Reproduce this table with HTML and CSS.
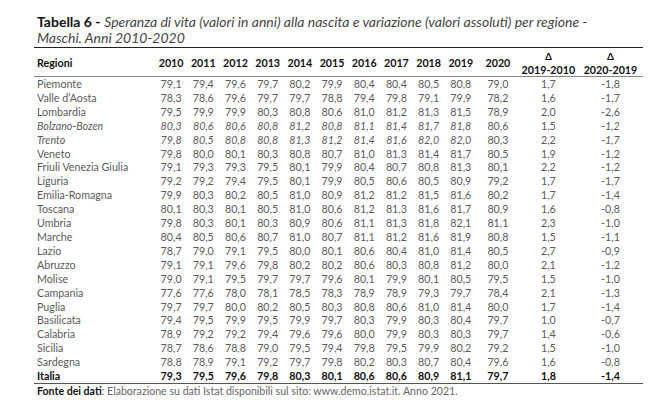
FILE: index.html
```html
<!DOCTYPE html>
<html lang="it">
<head>
<meta charset="utf-8">
<title>Tabella 6</title>
<link rel="stylesheet" href="styles.css">
</head>
<body>
<div class="page">
  <div class="title">
    <span class="t-bold">Tabella 6 -</span> <span class="t-it">Speranza di vita (valori in anni) alla nascita e variazione (valori assoluti) per regione -</span><br>
    <span class="t-it">Maschi. Anni 2010-2020</span>
  </div>
  <table class="data">
    <colgroup>
      <col class="c-reg"><col class="c-y"><col class="c-y"><col class="c-y"><col class="c-y"><col class="c-y"><col class="c-y"><col class="c-y"><col class="c-y"><col class="c-y"><col class="c-y"><col class="c-y20"><col class="c-d1"><col class="c-d2">
    </colgroup>
    <thead>
      <tr>
        <th class="reg">Regioni</th>
        <th>2010</th><th>2011</th><th>2012</th><th>2013</th><th>2014</th><th>2015</th><th>2016</th><th>2017</th><th>2018</th><th>2019</th><th>2020</th>
        <th class="delta"><span class="d">Δ</span><br>2019-2010</th>
        <th class="delta"><span class="d">Δ</span><br>2020-2019</th>
      </tr>
    </thead>
    <tbody>
      <tr><td>Piemonte</td><td>79,1</td><td>79,4</td><td>79,6</td><td>79,7</td><td>80,2</td><td>79,9</td><td>80,4</td><td>80,4</td><td>80,5</td><td>80,8</td><td>79,0</td><td>1,7</td><td>-1,8</td></tr>
      <tr><td>Valle d’Aosta</td><td>78,3</td><td>78,6</td><td>79,6</td><td>79,7</td><td>79,7</td><td>78,8</td><td>79,4</td><td>79,8</td><td>79,1</td><td>79,9</td><td>78,2</td><td>1,6</td><td>-1,7</td></tr>
      <tr><td>Lombardia</td><td>79,5</td><td>79,9</td><td>79,9</td><td>80,3</td><td>80,8</td><td>80,6</td><td>81,0</td><td>81,2</td><td>81,3</td><td>81,5</td><td>78,9</td><td>2,0</td><td>-2,6</td></tr>
      <tr class="it"><td>Bolzano-Bozen</td><td>80,3</td><td>80,6</td><td>80,6</td><td>80,8</td><td>81,2</td><td>80,8</td><td>81,1</td><td>81,4</td><td>81,7</td><td>81,8</td><td class="up">80,6</td><td class="up">1,5</td><td>-1,2</td></tr>
      <tr class="it"><td>Trento</td><td>79,8</td><td>80,5</td><td>80,8</td><td>80,8</td><td>81,3</td><td>81,2</td><td>81,4</td><td>81,6</td><td>82,0</td><td>82,0</td><td class="up">80,3</td><td class="up">2,2</td><td>-1,7</td></tr>
      <tr><td>Veneto</td><td>79,8</td><td>80,0</td><td>80,1</td><td>80,3</td><td>80,8</td><td>80,7</td><td>81,0</td><td>81,3</td><td>81,4</td><td>81,7</td><td>80,5</td><td>1,9</td><td>-1,2</td></tr>
      <tr><td>Friuli Venezia Giulia</td><td>79,1</td><td>79,3</td><td>79,3</td><td>79,5</td><td>80,1</td><td>79,9</td><td>80,4</td><td>80,7</td><td>80,8</td><td>81,3</td><td>80,1</td><td>2,2</td><td>-1,2</td></tr>
      <tr><td>Liguria</td><td>79,2</td><td>79,2</td><td>79,4</td><td>79,5</td><td>80,1</td><td>79,9</td><td>80,5</td><td>80,6</td><td>80,5</td><td>80,9</td><td>79,2</td><td>1,7</td><td>-1,7</td></tr>
      <tr><td>Emilia-Romagna</td><td>79,9</td><td>80,3</td><td>80,2</td><td>80,5</td><td>81,0</td><td>80,9</td><td>81,2</td><td>81,2</td><td>81,5</td><td>81,6</td><td>80,2</td><td>1,7</td><td>-1,4</td></tr>
      <tr><td>Toscana</td><td>80,1</td><td>80,3</td><td>80,1</td><td>80,5</td><td>81,0</td><td>80,6</td><td>81,2</td><td>81,3</td><td>81,6</td><td>81,7</td><td>80,9</td><td>1,6</td><td>-0,8</td></tr>
      <tr><td>Umbria</td><td>79,8</td><td>80,3</td><td>80,1</td><td>80,3</td><td>80,9</td><td>80,6</td><td>81,1</td><td>81,3</td><td>81,8</td><td>82,1</td><td>81,1</td><td>2,3</td><td>-1,0</td></tr>
      <tr><td>Marche</td><td>80,4</td><td>80,5</td><td>80,6</td><td>80,7</td><td>81,0</td><td>80,7</td><td>81,1</td><td>81,2</td><td>81,6</td><td>81,9</td><td>80,8</td><td>1,5</td><td>-1,1</td></tr>
      <tr><td>Lazio</td><td>78,7</td><td>79,0</td><td>79,1</td><td>79,5</td><td>80,0</td><td>80,1</td><td>80,6</td><td>80,4</td><td>81,0</td><td>81,4</td><td>80,5</td><td>2,7</td><td>-0,9</td></tr>
      <tr><td>Abruzzo</td><td>79,1</td><td>79,1</td><td>79,6</td><td>79,8</td><td>80,2</td><td>80,2</td><td>80,6</td><td>80,3</td><td>80,8</td><td>81,2</td><td>80,0</td><td>2,1</td><td>-1,2</td></tr>
      <tr><td>Molise</td><td>79,0</td><td>79,1</td><td>79,5</td><td>79,7</td><td>79,7</td><td>79,6</td><td>80,1</td><td>79,9</td><td>80,1</td><td>80,5</td><td>79,5</td><td>1,5</td><td>-1,0</td></tr>
      <tr><td>Campania</td><td>77,6</td><td>77,6</td><td>78,0</td><td>78,1</td><td>78,5</td><td>78,3</td><td>78,9</td><td>78,9</td><td>79,3</td><td>79,7</td><td>78,4</td><td>2,1</td><td>-1,3</td></tr>
      <tr><td>Puglia</td><td>79,7</td><td>79,7</td><td>80,0</td><td>80,2</td><td>80,5</td><td>80,3</td><td>80,8</td><td>80,6</td><td>81,0</td><td>81,4</td><td>80,0</td><td>1,7</td><td>-1,4</td></tr>
      <tr><td>Basilicata</td><td>79,4</td><td>79,5</td><td>79,9</td><td>79,5</td><td>79,9</td><td>79,7</td><td>80,3</td><td>79,9</td><td>80,3</td><td>80,4</td><td>79,7</td><td>1,0</td><td>-0,7</td></tr>
      <tr><td>Calabria</td><td>78,9</td><td>79,2</td><td>79,2</td><td>79,4</td><td>79,6</td><td>79,6</td><td>80,0</td><td>79,9</td><td>80,3</td><td>80,3</td><td>79,7</td><td>1,4</td><td>-0,6</td></tr>
      <tr><td>Sicilia</td><td>78,7</td><td>78,6</td><td>78,8</td><td>79,0</td><td>79,5</td><td>79,4</td><td>79,8</td><td>79,5</td><td>79,9</td><td>80,2</td><td>79,2</td><td>1,5</td><td>-1,0</td></tr>
      <tr><td>Sardegna</td><td>78,8</td><td>78,9</td><td>79,1</td><td>79,2</td><td>79,7</td><td>79,8</td><td>80,2</td><td>80,3</td><td>80,7</td><td>80,4</td><td>79,6</td><td>1,6</td><td>-0,8</td></tr>
      <tr class="tot"><td>Italia</td><td>79,3</td><td>79,5</td><td>79,6</td><td>79,8</td><td>80,3</td><td>80,1</td><td>80,6</td><td>80,6</td><td>80,9</td><td>81,1</td><td>79,7</td><td>1,8</td><td>-1,4</td></tr>
    </tbody>
  </table>
  <div class="source"><b>Fonte dei dati</b>: Elaborazione su dati Istat disponibili sul sito: www.demo.istat.it. Anno 2021.</div>
</div>
</body>
</html>
```

FILE: styles.css
```css
html, body {
  margin: 0;
  padding: 0;
  background: #ffffff;
}

body {
  font-family: Lato, "Liberation Sans", sans-serif;
}

.page {
  padding: 14px 0 0 34px;
  width: 609px;
}

.title {
  padding-left: 3px;
  font-size: 14px;
  line-height: 16px;
  color: #333;
  white-space: nowrap;
}

.t-bold {
  font-weight: 700;
  color: #111;
}

.t-it {
  font-style: italic;
  color: #444;
}

.data {
  margin-top: 1px;
  width: 609px;
  border-collapse: collapse;
  table-layout: fixed;
  font-size: 10.7px;
  color: #5a5a5a;
  border-top: 1.5px solid #222;
  border-bottom: 1.5px solid #555;
}

.c-reg { width: 121px; }
.c-y { width: 32.2px; }
.c-y20 { width: 42px; }
.c-d1 { width: 59px; }
.c-d2 { width: 65px; }

.data th {
  height: 27px;
  padding: 0;
  font-weight: 700;
  color: #111;
  text-align: center;
  vertical-align: middle;
  border-bottom: 1px solid #888;
  line-height: 13px;
  white-space: nowrap;
}

.data th.reg {
  text-align: left;
  padding-left: 3px;
}

.data th.delta {
  padding-top: 1px;
}

.data .d {
  font-size: 10px;
}

.data td {
  height: 13.9px;
  padding: 0;
  line-height: 13.9px;
  text-align: center;
  white-space: nowrap;
}

.data td:first-child {
  text-align: left;
  padding-left: 3px;
}

.data tr.it td {
  font-style: italic;
}

.data tr.it td.up {
  font-style: normal;
}

.data tr.tot td {
  font-weight: 700;
  color: #111;
}

.source {
  padding-left: 3px;
  font-size: 10.6px;
  line-height: 13px;
  color: #666;
  margin-top: 1px;
}

.source b {
  color: #111;
}
```
